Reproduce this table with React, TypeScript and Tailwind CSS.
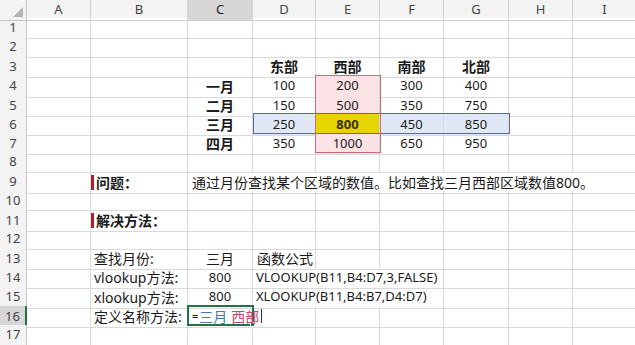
import React from "react";

type Cell = { span?: number; content?: React.ReactNode; cls?: string };

const GRID = "grid grid-cols-[27px_64px_97px_65px_63px_64px_64px_65px_64px_64px]";
const LETTERS = ["A", "B", "C", "D", "E", "F", "G", "H", "I"];
const SPAN: Record<number, string> = { 1: "", 2: "col-span-2", 3: "col-span-3", 7: "col-span-7" };

const PINK = "bg-[#fbe3e5]";
const BLUE = "bg-[#dfe8f4]";

const num = "justify-center text-[13px]";
const head = "justify-center font-bold text-[14px]";

function Bar({ children }: { children: React.ReactNode }) {
  return (
    <div className="flex items-center h-full">
      <span className="w-[3px] h-[15px] bg-[#a8232f] mr-[2px]" />
      <span className="font-bold text-[14px]">{children}</span>
    </div>
  );
}

function row(cells: Cell[]): Cell[] {
  // pad to 9 columns (A..I)
  const used = cells.reduce((s, c) => s + (c.span ?? 1), 0);
  return [...cells, ...Array.from({ length: 9 - used }, () => ({}))];
}

const ROWS: Record<number, Cell[]> = {
  3: row([{}, {}, {}, { content: "东部", cls: head }, { content: "西部", cls: head }, { content: "南部", cls: head }, { content: "北部", cls: head }]),
  4: row([{}, {}, { content: "一月", cls: head }, { content: "100", cls: num }, { content: "200", cls: `${num} ${PINK}` }, { content: "300", cls: num }, { content: "400", cls: num }]),
  5: row([{}, {}, { content: "二月", cls: head }, { content: "150", cls: num }, { content: "500", cls: `${num} ${PINK}` }, { content: "350", cls: num }, { content: "750", cls: num }]),
  6: row([
    {},
    {},
    { content: "三月", cls: head },
    { content: "250", cls: `${num} ${BLUE}` },
    { content: "800", cls: `${num} font-bold bg-[#e6d500] text-[#3a3000]` },
    { content: "450", cls: `${num} ${BLUE}` },
    { content: "850", cls: `${num} ${BLUE}` },
  ]),
  7: row([{}, {}, { content: "四月", cls: head }, { content: "350", cls: num }, { content: "1000", cls: `${num} ${PINK}` }, { content: "650", cls: num }, { content: "950", cls: num }]),
  9: row([
    {},
    { content: <Bar>问题：</Bar>, cls: "pl-0" },
    { span: 7, content: "通过月份查找某个区域的数值。比如查找三月西部区域数值800。", cls: "text-[14px] pl-[4px]" },
  ]),
  11: row([{}, { content: <Bar>解决方法：</Bar>, cls: "pl-0" }]),
  13: row([
    {},
    { content: "查找月份:", cls: "text-[14px] pl-[3px]" },
    { content: "三月", cls: "justify-center text-[14px]" },
    { content: "函数公式", cls: "text-[14px] pl-[4px]" },
  ]),
  14: row([
    {},
    { content: "vlookup方法:", cls: "text-[14px] pl-[3px]" },
    { content: "800", cls: num },
    { span: 3, content: "VLOOKUP(B11,B4:D7,3,FALSE)", cls: "text-[13px] pl-[3px]" },
  ]),
  15: row([
    {},
    { content: "xlookup方法:", cls: "text-[14px] pl-[3px]" },
    { content: "800", cls: num },
    { span: 3, content: "XLOOKUP(B11,B4:B7,D4:D7)", cls: "text-[13px] pl-[3px]" },
  ]),
  16: row([
    {},
    { content: "定义名称方法:", cls: "text-[14px] pl-[3px]" },
    {
      span: 2,
      // editing text sits above the selection outline
      content: (
        <span className="relative z-10 flex items-center text-[14px]">
          <span className="text-[11px] mr-[1px]">=</span>
          <span className="text-[#4a78a6]">三月</span>
          <span className="ml-[4px] text-[#c4456b]">西部</span>
          <span className="w-px h-[14px] bg-[#333] ml-[2px]" />
        </span>
      ),
      cls: "pl-[4px]",
    },
  ]),
};

export default function App() {
  return (
    <div
      className="relative w-[635px] h-[345px] overflow-hidden bg-white text-[#1a1a1a]"
      style={{ fontFamily: '"Noto Sans", "Noto Sans CJK SC", sans-serif' }}
    >
      {/* column headers */}
      <div className={`${GRID} h-[18px] bg-[#f3f3f3] text-[13px] text-[#444]`}>
        <div className="relative border-r border-b border-[#c8c8c8]">
          <svg className="absolute right-[3px] bottom-[3px]" width="10" height="10" viewBox="0 0 10 10">
            <polygon points="10,0 10,10 0,10" fill="#b5b5b5" />
          </svg>
        </div>
        {LETTERS.map((l) => (
          <div
            key={l}
            className={`flex items-center justify-center border-r border-b border-[#cfcfcf] ${l === "C" ? "bg-[#d6d6d6] text-[#222]" : ""}`}
          >
            {l}
          </div>
        ))}
      </div>

      {Array.from({ length: 17 }, (_, i) => i + 1).map((r) => {
        const cells = ROWS[r] ?? row([]);
        return (
          <div key={r} className={`${GRID} h-[19.2px]`}>
            <div
              className={`flex items-center justify-center text-[13px] text-[#444] border-b border-[#d4d4d4] ${
                r === 16 ? "bg-[#d6d6d6] border-r-2 border-r-[#217346]" : "bg-[#f3f3f3] border-r border-r-[#c8c8c8]"
              }`}
            >
              {r}
            </div>
            {cells.map((c, j) => (
              <div
                key={j}
                className={`flex items-center whitespace-nowrap overflow-visible border-r border-b border-[#dadada] ${SPAN[c.span ?? 1]} ${c.cls ?? ""}`}
              >
                {c.content}
              </div>
            ))}
          </div>
        );
      })}

      {/* region outlines drawn over the grid */}
      <div className="absolute left-[253px] top-[113px] w-[257px] h-[21px] border border-[#5a6b9a] pointer-events-none" />
      <div className="absolute left-[315px] top-[75px] w-[66px] h-[78px] border border-[#d06a7a] pointer-events-none" />
      {/* selected cell C16 */}
      <div className="absolute left-[187px] top-[305px] w-[67px] h-[21px] border-2 border-[#217346] pointer-events-none">
        <span className="absolute -right-[3px] -bottom-[3px] w-[5px] h-[5px] bg-[#217346] border border-white" />
      </div>
    </div>
  );
}
